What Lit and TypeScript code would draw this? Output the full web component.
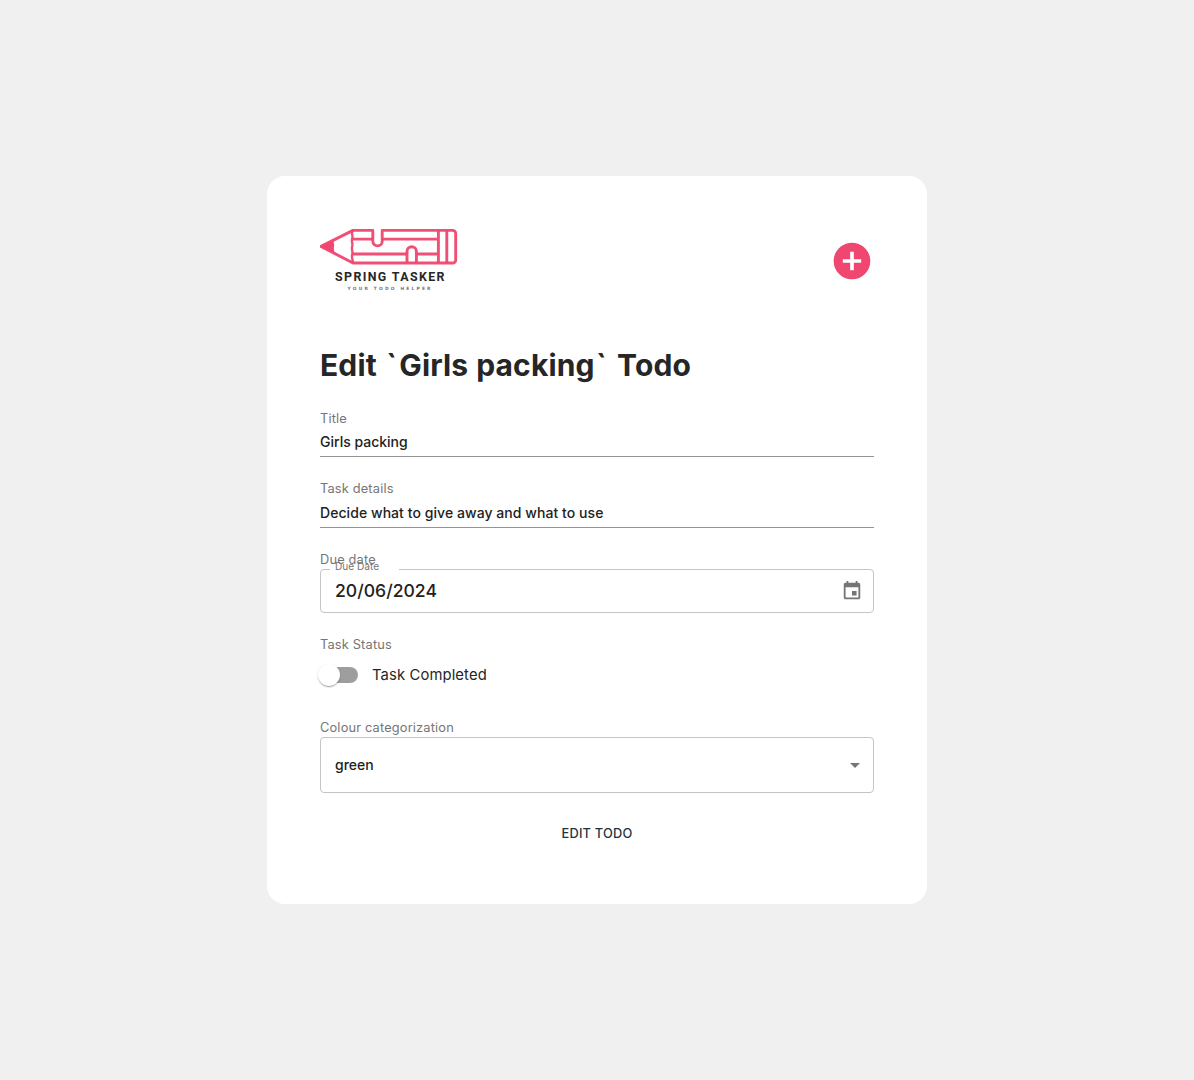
import { LitElement, html, css } from "lit";
import { customElement, property } from "lit/decorators.js";

@customElement("brand-logo")
class BrandLogo extends LitElement {
  static styles = css`
    :host { display: block; }
    .logo { display: block; }
    .name { font: 700 12.4px Roboto, sans-serif; fill: #262626; }
    .tagline { font: 700 4.4px "DejaVu Sans", sans-serif; fill: #777; }
  `;
  render() {
    return html`<svg class="logo" width="140" height="70" viewBox="0 0 140 70">
      <g fill="none" stroke="#ef476f" stroke-opacity="0.95" stroke-width="2.9" stroke-linejoin="round">
        <path d="M1 18.4 33 2.4H52.8V13.2a4.7 4.7 0 0 0 9.4 0V2.4H132.7a3 3 0 0 1 3 3V32a3 3 0 0 1-3 3H33Z" />
        <path d="M33 2.400c-2.500 3 .5 5-.8 8s1 5 0 8 1 5 0 8 .8 6 .8 8.600" stroke-width="2.400" />
        <path d="M32.500 11.100H52.800M62.200 11.100H118M32.500 26H87M96.400 26H118M118.400 2.400V35M126.800 2.400V35" />
        <path d="M87 35V23.400a4.700 4.700 0 0 1 9.400 0V35" />
      </g>
      <path d="M0 18.400 13.800 12C12.800 14.500 15 16 14 18.500s1 4 0 6.300Z" fill="#ef476f" />
      <text class="name" x="15" y="52.6" textLength="109.5">SPRING TASKER</text>
      <text class="tagline" x="27.5" y="61.6" textLength="83" lengthAdjust="spacing">YOUR TODO HELPER</text>
    </svg>`;
  }
}

@customElement("form-field")
class FormField extends LitElement {
  static styles = css`
    :host { display: block; }
    .label { height: 20px; line-height: 19px; font-size: 12.8px; letter-spacing: 0.17px; color: #757575; }
  `;
  @property() label = "";
  render() {
    return html`<div class="label">${this.label}</div><slot></slot>`;
  }
}

@customElement("app-root")
class AppRoot extends LitElement {
  static styles = css`
    :host { display: flex; min-height: 100vh; align-items: center; justify-content: center; background: #f0f0f0; font-family: Inter, sans-serif; color: #212529; }
    * { box-sizing: border-box; }
    .card { width: 660px; height: 728px; padding: 52px 53px; background: #fff; border-radius: 18px; }
    .header { display: flex; justify-content: space-between; align-items: flex-start; height: 119px; }
    .add { margin: 11px 0 0; display: block; }
    .heading { margin: 0 0 24px; height: 38px; line-height: 37px; font-size: 30px; letter-spacing: 0.15px; word-spacing: 0.6px; font-weight: 700; color: #262626; white-space: pre; }
    .tick { margin: 0 2.3px 0 1.2px; }
    .line { height: 28px; line-height: 26px; font-size: 14px; font-weight: 500; letter-spacing: 0.06px; border-bottom: 1px solid #949494; color: #222; }
    .title { margin-bottom: 22px; }
    .title .line { letter-spacing: 0; }
    .details .line { height: 29px; line-height: 28px; }
    .details { margin-bottom: 22px; }
    .box { display: flex; justify-content: space-between; align-items: center; border: 1px solid #c4c4c4; border-radius: 4px; padding: 0 10px 0 14px; position: relative; z-index: 0; color: #222; font-weight: 500; }
    .value { padding-bottom: 2px; }
    .date { height: 44px; margin-top: -1px; font-size: 17.6px; }
    .notch { position: absolute; left: 9px; top: -12px; width: 69px; height: 16px; padding-left: 5px; font-size: 10.1px; line-height: 16px; font-weight: 400; color: #757575; }
    .notch::before { content: ""; position: absolute; left: 0; right: 0; top: 11px; height: 1px; background: #fff; z-index: -1; }
    .due { margin-bottom: 22px; }
    .icon { display: block; fill: #757575; }
    .toggle { display: flex; align-items: center; gap: 14px; height: 40px; font-size: 14.8px; letter-spacing: 0.12px; color: #262626; }
    .track { display: flex; align-items: center; width: 38px; height: 16px; border-radius: 8px; background: #9e9e9e; }
    .thumb { flex: none; width: 22px; height: 22px; margin-left: -2px; border-radius: 50%; background: #fff; box-shadow: 0 2px 1px -1px rgba(0,0,0,.2), 0 1px 1px rgba(0,0,0,.14), 0 1px 3px rgba(0,0,0,.12); }
    .status { margin-bottom: 23px; }
    .select { height: 56px; margin-top: -1px; padding-right: 6px; font-size: 14px; }
    .submit { display: block; margin: 22px auto 0; padding: 0 8px; height: 36px; border: 0; background: none; font: 500 12.8px Inter, sans-serif; letter-spacing: 0.2px; color: #1d3540; }
  `;
  render() {
    return html`<main class="card">
      <header class="header">
        <brand-logo></brand-logo>
        <svg class="add" width="44" height="44" viewBox="0 0 24 24"><path fill="#ef476f" d="M12 2C6.48 2 2 6.48 2 12s4.480 10 10 10 10-4.480 10-10S17.520 2 12 2zm5 11h-4v4h-2v-4H7v-2h4V7h2v4h4v2z"/></svg>
      </header>
      <h1 class="heading">Edit <span class="tick">\`</span>Girls packing<span class="tick">\`</span> Todo</h1>
      <form-field class="title" label="Title"><div class="line">Girls packing</div></form-field>
      <form-field class="details" label="Task details"><div class="line">Decide what to give away and what to use</div></form-field>
      <form-field class="due" label="Due date">
        <div class="box date"><span class="notch">Due Date</span><span class="value">20/06/2024</span>
          <svg class="icon" width="22" height="22" viewBox="0 0 24 24"><path d="M17 12h-5v5h5v-5zM16 1v2H8V1H6v2H5c-1.110 0-1.990.9-1.990 2L3 19c0 1.100.89 2 2 2h14c1.100 0 2-.9 2-2V5c0-1.100-.9-2-2-2h-1V1h-2zm3 18H5V8h14v11z"/></svg>
        </div>
      </form-field>
      <form-field class="status" label="Task Status">
        <div class="toggle"><span class="track"><span class="thumb"></span></span>Task Completed</div>
      </form-field>
      <form-field label="Colour categorization">
        <div class="box select"><span class="value">green</span><svg class="icon" width="24" height="24" viewBox="0 0 24 24"><path d="m7 10 5 5 5-5z"/></svg></div>
      </form-field>
      <button class="submit">EDIT TODO</button>
    </main>`;
  }
}
